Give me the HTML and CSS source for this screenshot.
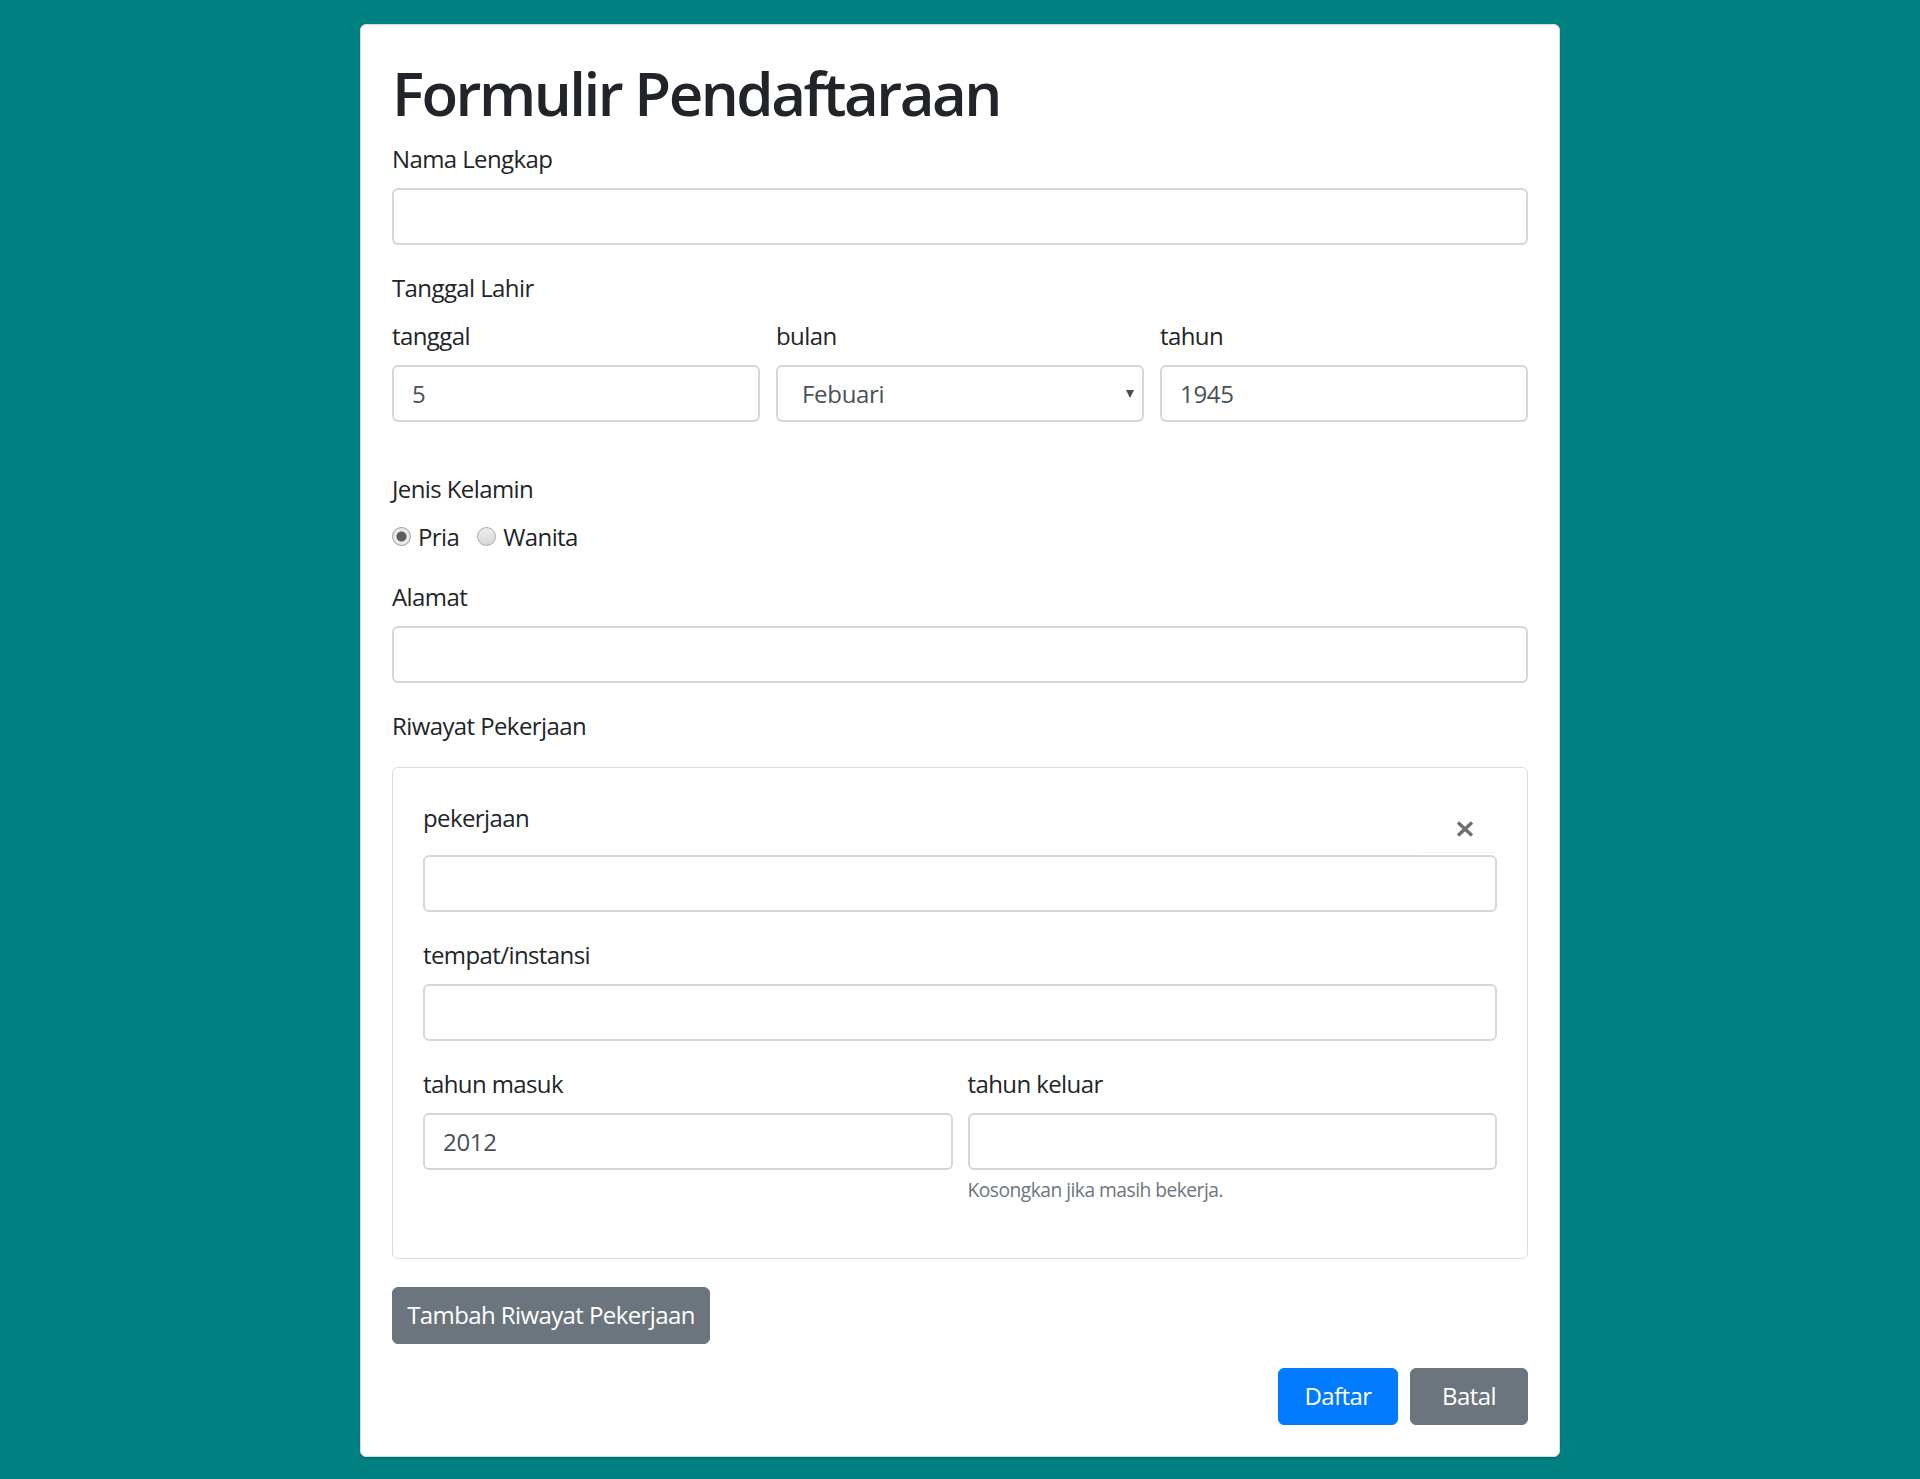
FILE: index.html
```html
<!DOCTYPE html>
<html lang="id">
<head>
<meta charset="utf-8">
<title>Formulir Pendaftaraan</title>
<link rel="stylesheet" href="styles.css">
</head>
<body>
<div class="card">
  <h1 class="title">Formulir Pendaftaraan</h1>
  <form>
    <div class="form-group">
      <label class="label">Nama Lengkap</label>
      <input class="control" type="text">
    </div>

    <div class="form-group">
      <label class="label">Tanggal Lahir</label>
      <div class="row3">
        <div class="form-group">
          <label class="label">tanggal</label>
          <input class="control" type="text" value="5">
        </div>
        <div class="form-group">
          <label class="label">bulan</label>
          <div class="select-wrap">
            <select class="control select">
              <option>Januari</option>
              <option selected>Febuari</option>
              <option>Maret</option>
            </select>
          </div>
        </div>
        <div class="form-group">
          <label class="label">tahun</label>
          <input class="control" type="text" value="1945">
        </div>
      </div>
    </div>

    <div class="form-group">
      <label class="label">Jenis Kelamin</label>
      <div class="radios">
        <label class="radio"><input type="radio" name="jk" checked><span>Pria</span></label>
        <label class="radio"><input type="radio" name="jk"><span>Wanita</span></label>
      </div>
    </div>

    <div class="form-group">
      <label class="label">Alamat</label>
      <input class="control" type="text">
    </div>

    <div class="form-group">
      <label class="label label-gap">Riwayat Pekerjaan</label>
      <div class="job-card">
        <div class="job-head">
          <label class="label">pekerjaan</label>
          <button type="button" class="close" aria-label="Close">
            <svg width="18" height="16" viewBox="0 0 18 16"><path d="M2 1.5 L16 14.5 M16 1.5 L2 14.5" stroke="#6f6f6f" stroke-width="3.4" stroke-linecap="butt"/></svg>
          </button>
        </div>
        <input class="control" type="text">
        <div class="form-group job-gap">
          <label class="label">tempat/instansi</label>
          <input class="control" type="text">
        </div>
        <div class="row2">
          <div class="form-group">
            <label class="label">tahun masuk</label>
            <input class="control" type="text" value="2012">
          </div>
          <div class="form-group">
            <label class="label">tahun keluar</label>
            <input class="control" type="text">
            <small class="help">Kosongkan jika masih bekerja.</small>
          </div>
        </div>
      </div>
    </div>

    <button type="button" class="btn btn-secondary btn-add">Tambah Riwayat Pekerjaan</button>

    <div class="actions">
      <button type="submit" class="btn btn-primary btn-daftar">Daftar</button>
      <button type="button" class="btn btn-secondary btn-batal">Batal</button>
    </div>
  </form>
</div>
</body>
</html>
```

FILE: styles.css
```css
* { box-sizing: border-box; }

html, body {
  margin: 0;
  padding: 0;
}

body {
  background: #008080;
  font-family: "Open Sans", "Noto Sans", "Liberation Sans", sans-serif;
  font-size: 24px;
  line-height: 36px;
  letter-spacing: -0.6px;
  color: #212529;
  padding: 24px 0 24px;
}

.card {
  width: 1200px;
  margin: 0 auto;
  background: #fff;
  border: 1px solid #d9d9d9;
  border-radius: 6px;
  box-shadow: 0 2px 2px rgba(0, 0, 0, 0.12);
  padding: 31px 31px 31px;
}

.title {
  font-size: 60px;
  line-height: 72px;
  font-weight: 600;
  margin: 1px 0 11px;
  letter-spacing: -2.5px;
}

form { margin: 0; }

.form-group { margin-bottom: 24px; }

.label {
  display: block;
  margin-bottom: 12px;
  padding-top: 1px;
  height: 36px;
}

.label-gap { margin-bottom: 24px; }

.control {
  display: block;
  width: 100%;
  height: 57px;
  padding: 9px 18px;
  font: inherit;
  letter-spacing: -0.3px;
  color: #495057;
  background: #fff;
  border: 2px solid #d3d7dc;
  border-radius: 6px;
  outline: none;
}

.select-wrap { position: relative; }

.select {
  appearance: none;
  -webkit-appearance: none;
  padding-left: 24px;
}

.select-wrap::after {
  content: "";
  position: absolute;
  right: 10px;
  top: 25px;
  border-left: 4px solid transparent;
  border-right: 4px solid transparent;
  border-top: 8px solid #474d52;
  pointer-events: none;
}

.row3 {
  display: grid;
  grid-template-columns: 1fr 1fr 1fr;
  column-gap: 16px;
}

.row2 {
  display: grid;
  grid-template-columns: 1fr 1fr;
  column-gap: 15px;
}

.radios {
  display: flex;
  align-items: center;
  height: 36px;
  padding-top: 1px;
}

.radio {
  display: inline-flex;
  align-items: center;
  margin-right: 18px;
}

.radio input {
  appearance: none;
  -webkit-appearance: none;
  width: 19px;
  height: 19px;
  margin: 0 7px 0 0;
  border: 1px solid #a9a9a9;
  border-radius: 50%;
  background: linear-gradient(#ececec, #d9d9d9);
  position: relative;
}

.radio input:checked {
  background: radial-gradient(circle, #5e5e5e 0 4.6px, #e9e9e9 5.4px);
  border-color: #9c9c9c;
}

.job-card {
  border: 1px solid #dcdcdc;
  border-radius: 6px;
  padding: 31px 30px 29px;
}

.job-head {
  display: flex;
  justify-content: space-between;
  align-items: flex-start;
  margin-bottom: 2px;
}

.close {
  width: 74px;
  height: 54px;
  padding: 22px 0 0 33px;
  margin: 0;
  border: none;
  border-bottom: 1px solid #f3f3f3;
  background: transparent;
  display: flex;
  align-items: flex-start;
  cursor: pointer;
}

.job-gap { margin-top: 24px; }

.help {
  display: block;
  margin-top: 6px;
  font-size: 19.2px;
  line-height: 28.8px;
  letter-spacing: -0.5px;
  color: #6c757d;
}

.btn {
  display: inline-block;
  height: 57px;
  padding: 9px 18px;
  font: inherit;
  letter-spacing: -0.6px;
  color: #fff;
  border: 1px solid transparent;
  border-radius: 6px;
  cursor: pointer;
  text-align: center;
}

.btn-secondary {
  background: #6c757d;
  border-color: #6c757d;
}

.btn-primary {
  background: #007bff;
  border-color: #007bff;
}

.btn-add {
  width: 318px;
  margin-top: 4px;
  padding: 9px 0;
}

.actions {
  display: flex;
  justify-content: flex-end;
  gap: 12px;
  margin-top: 24px;
}

.btn-daftar { width: 120px; padding: 9px 0; }
.btn-batal { width: 118px; padding: 9px 0; }
```
